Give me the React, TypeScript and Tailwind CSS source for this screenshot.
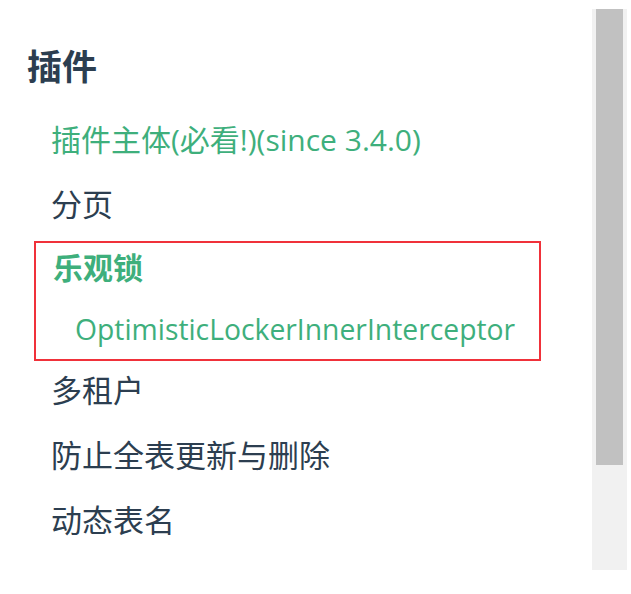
import React from 'react'

const FONT = "font-['Open_Sans','Noto_Sans_CJK_SC',sans-serif]"

const Row = ({ label, active = false, mixed = false }: { label: string; active?: boolean; mixed?: boolean }) => (
  <div
    className={`h-[65px] flex items-center pl-[51px] leading-none ${mixed ? 'text-[30px]' : 'text-[31px]'} ${
      active ? 'text-[#3eaf7c]' : 'text-[#2c3e50]'
    }`}
  >
    {label}
  </div>
)

export default function App() {
  return (
    <div className={`w-[631px] h-[594px] bg-white flex ${FONT}`}>
      <div className="flex-1 flex flex-col">
        <div className="mt-[44px] h-[44px] flex items-center pl-[27px] text-[35px] font-bold text-[#2c3e50] leading-none">
          插件
        </div>
        <div className="mt-[19px]">
          <Row label="插件主体(必看!)(since 3.4.0)" active mixed />
          <Row label="分页" />
        </div>
        <div className="mt-[4px] ml-[34px] w-[507px] border-2 border-[#f0313a] flex flex-col">
          <div className="h-[50px] flex items-center pl-[17px] text-[30px] font-bold text-[#3eaf7c] leading-none">
            乐观锁
          </div>
          <div className="h-[66px] pt-[6px] flex items-center pl-[39px] text-[28.3px] text-[#3eaf7c] leading-none">
            OptimisticLockerInnerInterceptor
          </div>
        </div>
        <div className="-mt-[3px]">
          <Row label="多租户" />
          <Row label="防止全表更新与删除" />
          <Row label="动态表名" />
        </div>
      </div>
      <div className="mt-[9px] ml-[51px] mr-[4px] w-[35px] h-[561px] bg-[#f1f1f1] flex justify-center">
        <div className="w-[27px] h-[456px] bg-[#c1c1c1]" />
      </div>
    </div>
  )
}
